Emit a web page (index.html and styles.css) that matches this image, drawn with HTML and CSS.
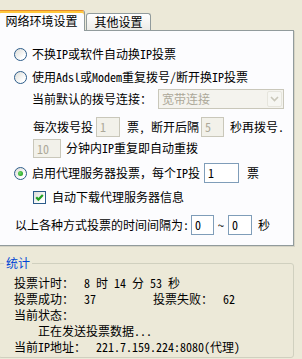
FILE: index.html
```html
<!DOCTYPE html>
<html>
<head>
<meta charset="utf-8">
<link rel="stylesheet" href="styles.css">
</head>
<body>
<div class="tabs">
  <div class="tab active">网络环境设置</div>
  <div class="tab">其他设置</div>
</div>
<div class="panel">
  <div class="row r1"><span class="radio"></span><span>不换IP或软件自动换IP投票</span></div>
  <div class="row r2"><span class="radio"></span><span>使用Adsl或Modem重复拨号/断开换IP投票</span></div>
  <div class="row r3"><span class="w-conn">当前默认的拨号连接：</span><div class="combo"><span class="combo-text">宽带连接</span><span class="drop"><svg width="9" height="6" viewBox="0 0 9 6"><path d="M1 1 L4.5 4.5 L8 1" fill="none" stroke="#C9C7BA" stroke-width="1.6"/></svg></span></div></div>
  <div class="row r4"><span class="w-a">每次拨号投</span><span class="input dis w24">1</span><span class="w-b">票, 断开后隔</span><span class="input dis w23">5</span><span class="after5">秒再拨号.</span></div>
  <div class="row r5"><span class="input dis w28 h19">10</span><span class="after10">分钟内IP重复即自动重拨</span></div>
  <div class="row r6"><span class="radio on"></span><span class="w-proxy">启用代理服务器投票，每个IP投</span><span class="input w35">1</span><span class="after-p">票</span></div>
  <div class="row r7"><span class="check"><svg width="11" height="11" viewBox="0 0 11 11"><path d="M2.2 5.2 L4.4 7.6 L8.8 3" fill="none" stroke="#21A121" stroke-width="2.2"/></svg></span><span>自动下载代理服务器信息</span></div>
  <div class="row r8"><span class="w-int">以上各种方式投票的时间间隔为:</span><span class="input w23">0</span><span class="tilde">~</span><span class="input w24">0</span><span class="after-s">秒</span></div>
</div>
<fieldset class="stats">
  <legend>统计</legend>
  <div class="srow"><span class="sl">投票计时：</span><span class="time">8 时 14 分 53 秒</span></div>
  <div class="srow"><span class="sl">投票成功：</span><span class="sv">37</span><span class="sl">投票失败：</span><span>62</span></div>
  <div class="srow"><span class="sl">当前状态：</span></div>
  <div class="srow status">正在发送投票数据...</div>
  <div class="srow"><span class="sl ip">当前IP地址：</span><span>221.7.159.224:8080(代理)</span></div>
</fieldset>
</body>
</html>
```

FILE: styles.css
```css
* { box-sizing: border-box; }
body {
  margin: 0;
  width: 302px;
  height: 359px;
  overflow: hidden;
  background: #ECE9D8;
  font-family: "Noto Sans Mono CJK SC", "Noto Sans CJK SC", sans-serif;
  font-size: 12px;
  color: #000;
}
.tabs {
  display: flex;
  align-items: flex-end;
  height: 30px;
}
.tab {
  height: 17px;
  width: 65px;
  margin-left: 1px;
  border: 1px solid #919B9C;
  border-bottom: none;
  border-radius: 3px 3px 0 0;
  background: linear-gradient(#FFFFFF, #ECEBE6);
  display: flex;
  align-items: center;
  justify-content: center;
  line-height: 14px;
  white-space: nowrap;
}
.tab.active {
  position: relative;
  z-index: 1;
  height: 21px;
  width: 87px;
  margin-left: -2px;
  margin-bottom: -1px;
  background: #FCFCFE;
  border-top: 1px solid #E68B2C;
  box-shadow: inset 0 2px 0 #FFC83C;
}
.panel {
  width: 295px;
  height: 216px;
  margin-left: -1px;
  border: 1px solid #919B9C;
  background: #FCFCFE;
  padding-top: 13px;
  box-shadow: 1px 1px 0 #D6D3C4;
}
.row {
  display: flex;
  align-items: center;
  height: 20px;
  white-space: nowrap;
  line-height: 16px;
}
.r2 { margin-top: 3px; }
.r3 { margin-top: 2px; padding-left: 32px; }
.r4 { margin-top: 8px; padding-left: 33px; }
.r5 { margin-top: 1px; padding-left: 33px; }
.r6 { margin-top: 5px; }
.r7 { margin-top: 4px; padding-left: 33px; }
.r8 { margin-top: 8px; padding-left: 15px; }
.radio {
  flex: none;
  width: 13px;
  height: 13px;
  margin-left: 14px;
  margin-right: 5px;
  border: 1px solid #2C5C8A;
  border-radius: 50%;
  background: linear-gradient(135deg, #DCDCD7, #FFFFFF 75%);
  display: flex;
  align-items: center;
  justify-content: center;
}
.radio.on::after {
  content: "";
  width: 5px;
  height: 5px;
  border-radius: 50%;
  background: radial-gradient(circle at 40% 40%, #6EDB6A, #21A121 80%);
}
.check {
  flex: none;
  width: 13px;
  height: 13px;
  margin-right: 6px;
  border: 1px solid #2C5C8A;
  background: linear-gradient(135deg, #DCDCD7, #FFFFFF 75%);
  display: flex;
  align-items: center;
  justify-content: center;
}
.w-conn { width: 126px; }
.combo {
  width: 126px;
  height: 20px;
  border: 1px solid #C9C7BA;
  background: #F4F3EE;
  display: flex;
  align-items: center;
  justify-content: space-between;
  padding: 1px 1px 1px 3px;
}
.combo-text { color: #ACA899; }
.drop {
  width: 15px;
  height: 16px;
  border: 1px solid #E6E5DD;
  background: #F6F6F2;
  border-radius: 2px;
  display: flex;
  align-items: center;
  justify-content: center;
}
.input {
  flex: none;
  height: 20px;
  border: 1px solid #7F9DB9;
  background: #FFFFFF;
  padding-left: 3px;
  line-height: 18px;
}
.input.dis {
  border-color: #C9C7BA;
  background: #F2F1EA;
  color: #ACA899;
}
.h19 { height: 19px; line-height: 17px; }
.w23 { width: 23px; }
.w24 { width: 24px; }
.w28 { width: 28px; }
.w35 { width: 35px; }
.w-a { width: 63px; }
.w-b { width: 74px; margin-left: 7px; }
.after5 { margin-left: 6px; }
.after10 { margin-left: 5px; }
.w-proxy { width: 172px; }
.after-p { margin-left: 8px; }
.w-int { width: 176px; }
.tilde { width: 14px; text-align: center; }
.after-s { margin-left: 6px; }
.stats {
  margin: 10px 0 0 -2px;
  width: 296px;
  height: 102px;
  border: 1px solid #D0D0BF;
  border-radius: 3px;
  padding: 5px 0 0 0;
  min-width: 0;
}
.stats legend {
  margin-left: 5px;
  padding: 0 2px;
  color: #0046D5;
  line-height: 14px;
}
.srow {
  display: flex;
  height: 16px;
  line-height: 16px;
  padding-left: 15px;
  white-space: pre;
}
.sl { width: 70px; }
.sv { width: 69px; }
.sl.ip { width: 82px; }
.status { padding-left: 39px; }
```
